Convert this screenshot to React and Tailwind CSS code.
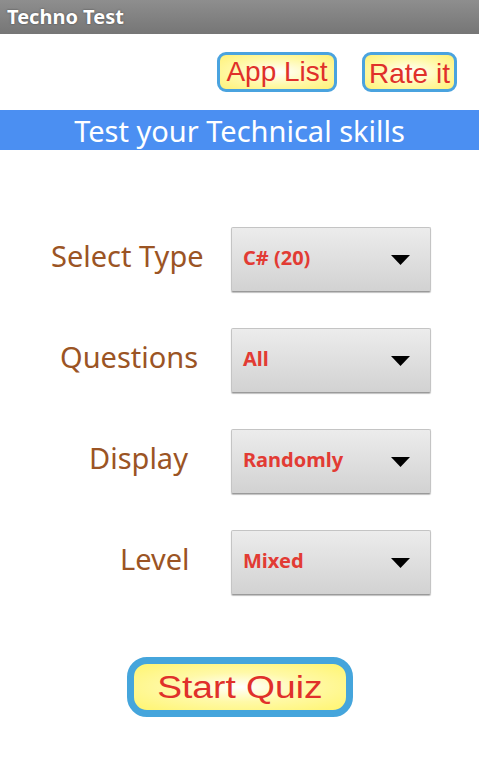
export default function App() {
  const rows = [
    { label: "Select Type", value: "C# (20)", pl: "pl-[51px]" },
    { label: "Questions", value: "All", pl: "pl-[60px]" },
    { label: "Display", value: "Randomly", pl: "pl-[89px]" },
    { label: "Level", value: "Mixed", pl: "pl-[120px]" },
  ];

  return (
    <div className="w-[479px] h-[759px] bg-white overflow-hidden font-['Noto_Sans',sans-serif]">
      <div className="h-[34px] bg-gradient-to-b from-[#8e8e8e] to-[#767676] flex items-center pl-[7px]">
        <span className="text-white font-bold text-[20px] leading-none [text-shadow:0_0_2px_rgba(0,0,0,0.5)]">Techno Test</span>
      </div>

      <div className="h-[76px] flex items-start justify-end pt-[18px] pr-[22px] gap-[25px]">
        <button className="h-[40px] w-[120px] rounded-[9px] border-[3px] border-[#4aa3df] bg-[radial-gradient(ellipse_at_center,#ffffff_0%,#fff9a8_55%,#fff176_100%)] text-[#e0302a] text-[28px] leading-none font-['Liberation_Sans',sans-serif] flex items-center justify-center">
          App List
        </button>
        <button className="h-[40px] w-[95px] rounded-[9px] border-[3px] border-[#4aa3df] bg-[radial-gradient(ellipse_at_center,#ffffff_0%,#fff9a8_55%,#fff176_100%)] text-[#e0302a] text-[28px] leading-none font-['Liberation_Sans',sans-serif] flex items-center justify-center pt-[3px]">
          Rate it
        </button>
      </div>

      <div className="h-[40px] bg-[#4b8ff2] flex items-center justify-center">
        <span className="text-white text-[29px] leading-none">Test your Technical skills</span>
      </div>

      <div className="pt-[77px] flex flex-col gap-[36px]">
        {rows.map((r) => (
          <div key={r.label} className={`flex items-center ${r.pl}`}>
            <span className="text-[#9b5424] text-[29px] leading-none whitespace-nowrap -mt-[9px]">{r.label}</span>
            <div className="flex-1 flex justify-end pr-[48px]">
              <div className="w-[200px] h-[65px] rounded-[2px] border border-[#c4c4c4] border-b-[#9a9a9a] bg-gradient-to-b from-[#ececec] to-[#d2d2d2] shadow-[0_1px_1px_rgba(0,0,0,0.25)] flex items-center justify-between pl-[11px] pr-[20px]">
                <span className="text-[#e23b34] font-bold text-[20px] leading-none -mt-[3px]">{r.value}</span>
                <svg width="19" height="10" viewBox="0 0 19 10">
                  <path d="M0 0 L19 0 L9.5 10 Z" fill="#000" />
                </svg>
              </div>
            </div>
          </div>
        ))}
      </div>

      <div className="flex justify-center pt-[62px]">
        <button className="w-[226px] h-[60px] rounded-[20px] border-[7px] border-[#45a5dc] bg-[radial-gradient(ellipse_at_center,#ffffff_0%,#fff9a8_45%,#fff56f_100%)] text-[#e0302a] text-[31px] leading-none font-['Liberation_Sans',sans-serif] flex items-center justify-center">
          <span className="inline-block scale-x-[1.2]">Start Quiz</span>
        </button>
      </div>
    </div>
  );
}
